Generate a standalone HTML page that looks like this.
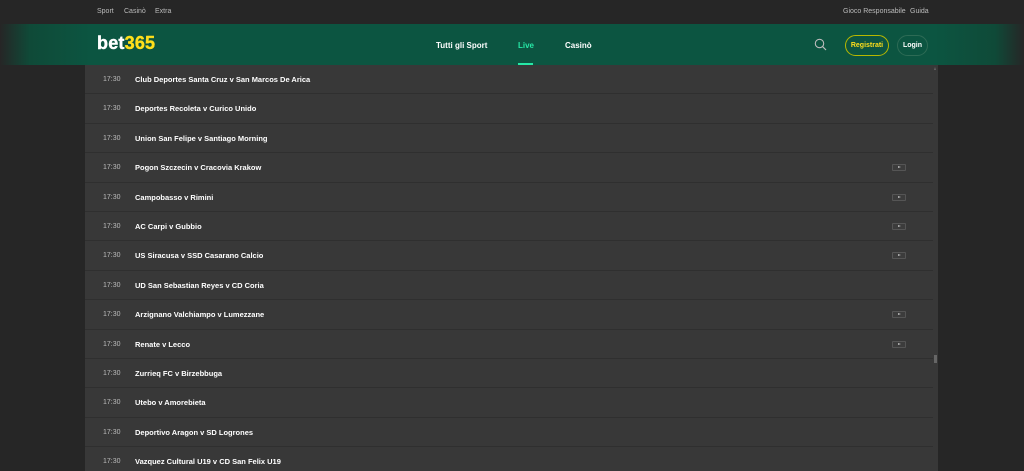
<!DOCTYPE html>
<html><head><style>
*{margin:0;padding:0;box-sizing:border-box}
html,body{width:1024px;height:471px;overflow:hidden}
body{background:#262626;font-family:"Liberation Sans",sans-serif;position:relative}
.top{position:absolute;top:0;left:0;width:1024px;height:24px;font-size:7px;color:#bbb}
.top span{position:absolute;top:8px}
.hdr{position:absolute;top:24px;left:0;width:1024px;height:41px;background:linear-gradient(90deg,#262626 0px,#0f4a38 30px,#0c5541 90px,#0c5541 935px,#0f4a38 995px,#262626 1024px)}
.logo{position:absolute;left:97px;top:9px;font-size:18px;font-weight:900;color:#fff;letter-spacing:0.2px;-webkit-text-stroke:0.4px #fff}
.logo b{color:#ffdf1b;-webkit-text-stroke:0.4px #ffdf1b}
.nav{position:absolute;top:17px;font-size:8px;font-weight:bold;color:#fff}
.btn{position:absolute;top:11px;height:21px;border-radius:11px;font-size:7px;font-weight:bold;line-height:19px;text-align:center}
.panel{position:absolute;left:85px;top:65px;width:853px;height:406px;background:#383838}
.row{position:absolute;left:0;width:848px;height:29.4px;border-bottom:1px solid #2f2f2f}
.row .t{position:absolute;left:18px;top:10px;font-size:7px;line-height:9px;color:#bbb}
.row .n{position:absolute;left:50px;top:10px;font-size:7.5px;line-height:9px;font-weight:bold;color:#fff}
.row .i{position:absolute;left:807px;top:11px;width:14px;height:7px;border:1px solid #555;border-radius:1px;background:#3c3c3c}
.row .i:after{content:"";position:absolute;left:5px;top:1px;border-left:3px solid #bbb;border-top:1.5px solid transparent;border-bottom:1.5px solid transparent}
.sb{position:absolute;left:933px;top:65px;width:5px;height:406px}
</style></head><body>
<div class="top"><span style="left:97px">Sport</span><span style="left:124px">Casinò</span><span style="left:155px">Extra</span><span style="left:843px">Gioco Responsabile</span><span style="left:910px">Guida</span></div>
<div class="hdr">
<div class="logo">bet<b>365</b></div>
<div class="nav" style="left:436px">Tutti gli Sport</div>
<div class="nav" style="left:518px;color:#26e8a6">Live</div>
<div style="position:absolute;left:518px;top:39px;width:15px;height:2px;background:#26e8a6"></div>
<div class="nav" style="left:565px">Casinò</div>
<svg style="position:absolute;left:814px;top:14px" width="13" height="13" viewBox="0 0 13 13"><circle cx="5.5" cy="5.5" r="4.2" fill="none" stroke="#bbb" stroke-width="1.1"/><path d="M8.6 8.6L12 12" stroke="#bbb" stroke-width="1.2"/></svg>
<div class="btn" style="left:845px;width:44px;border:1px solid #b8b800;color:#ffdf1b">Registrati</div>
<div class="btn" style="left:897px;width:31px;border:1px solid #2d6b55;color:#fff">Login</div>
</div>
<div class="panel">
<div class="row" style="top:0"><span class="t">17:30</span><span class="n">Club Deportes Santa Cruz v San Marcos De Arica</span></div>
<div class="row" style="top:29.4px"><span class="t">17:30</span><span class="n">Deportes Recoleta v Curico Unido</span></div>
<div class="row" style="top:58.8px"><span class="t">17:30</span><span class="n">Union San Felipe v Santiago Morning</span></div>
<div class="row" style="top:88.2px"><span class="t">17:30</span><span class="n">Pogon Szczecin v Cracovia Krakow</span><span class="i"></span></div>
<div class="row" style="top:117.6px"><span class="t">17:30</span><span class="n">Campobasso v Rimini</span><span class="i"></span></div>
<div class="row" style="top:147px"><span class="t">17:30</span><span class="n">AC Carpi v Gubbio</span><span class="i"></span></div>
<div class="row" style="top:176.4px"><span class="t">17:30</span><span class="n">US Siracusa v SSD Casarano Calcio</span><span class="i"></span></div>
<div class="row" style="top:205.8px"><span class="t">17:30</span><span class="n">UD San Sebastian Reyes v CD Coria</span></div>
<div class="row" style="top:235.2px"><span class="t">17:30</span><span class="n">Arzignano Valchiampo v Lumezzane</span><span class="i"></span></div>
<div class="row" style="top:264.6px"><span class="t">17:30</span><span class="n">Renate v Lecco</span><span class="i"></span></div>
<div class="row" style="top:294px"><span class="t">17:30</span><span class="n">Zurrieq FC v Birzebbuga</span></div>
<div class="row" style="top:323.4px"><span class="t">17:30</span><span class="n">Utebo v Amorebieta</span></div>
<div class="row" style="top:352.8px"><span class="t">17:30</span><span class="n">Deportivo Aragon v SD Logrones</span></div>
<div class="row" style="top:382.2px"><span class="t">17:30</span><span class="n">Vazquez Cultural U19 v CD San Felix U19</span></div>
</div>
<div class="sb"><div style="position:absolute;left:1px;top:290px;width:3px;height:8px;background:#666"></div><div style="position:absolute;left:1px;top:2px;border-bottom:3px solid #666;border-left:1.5px solid transparent;border-right:1.5px solid transparent"></div></div>
</body></html>
